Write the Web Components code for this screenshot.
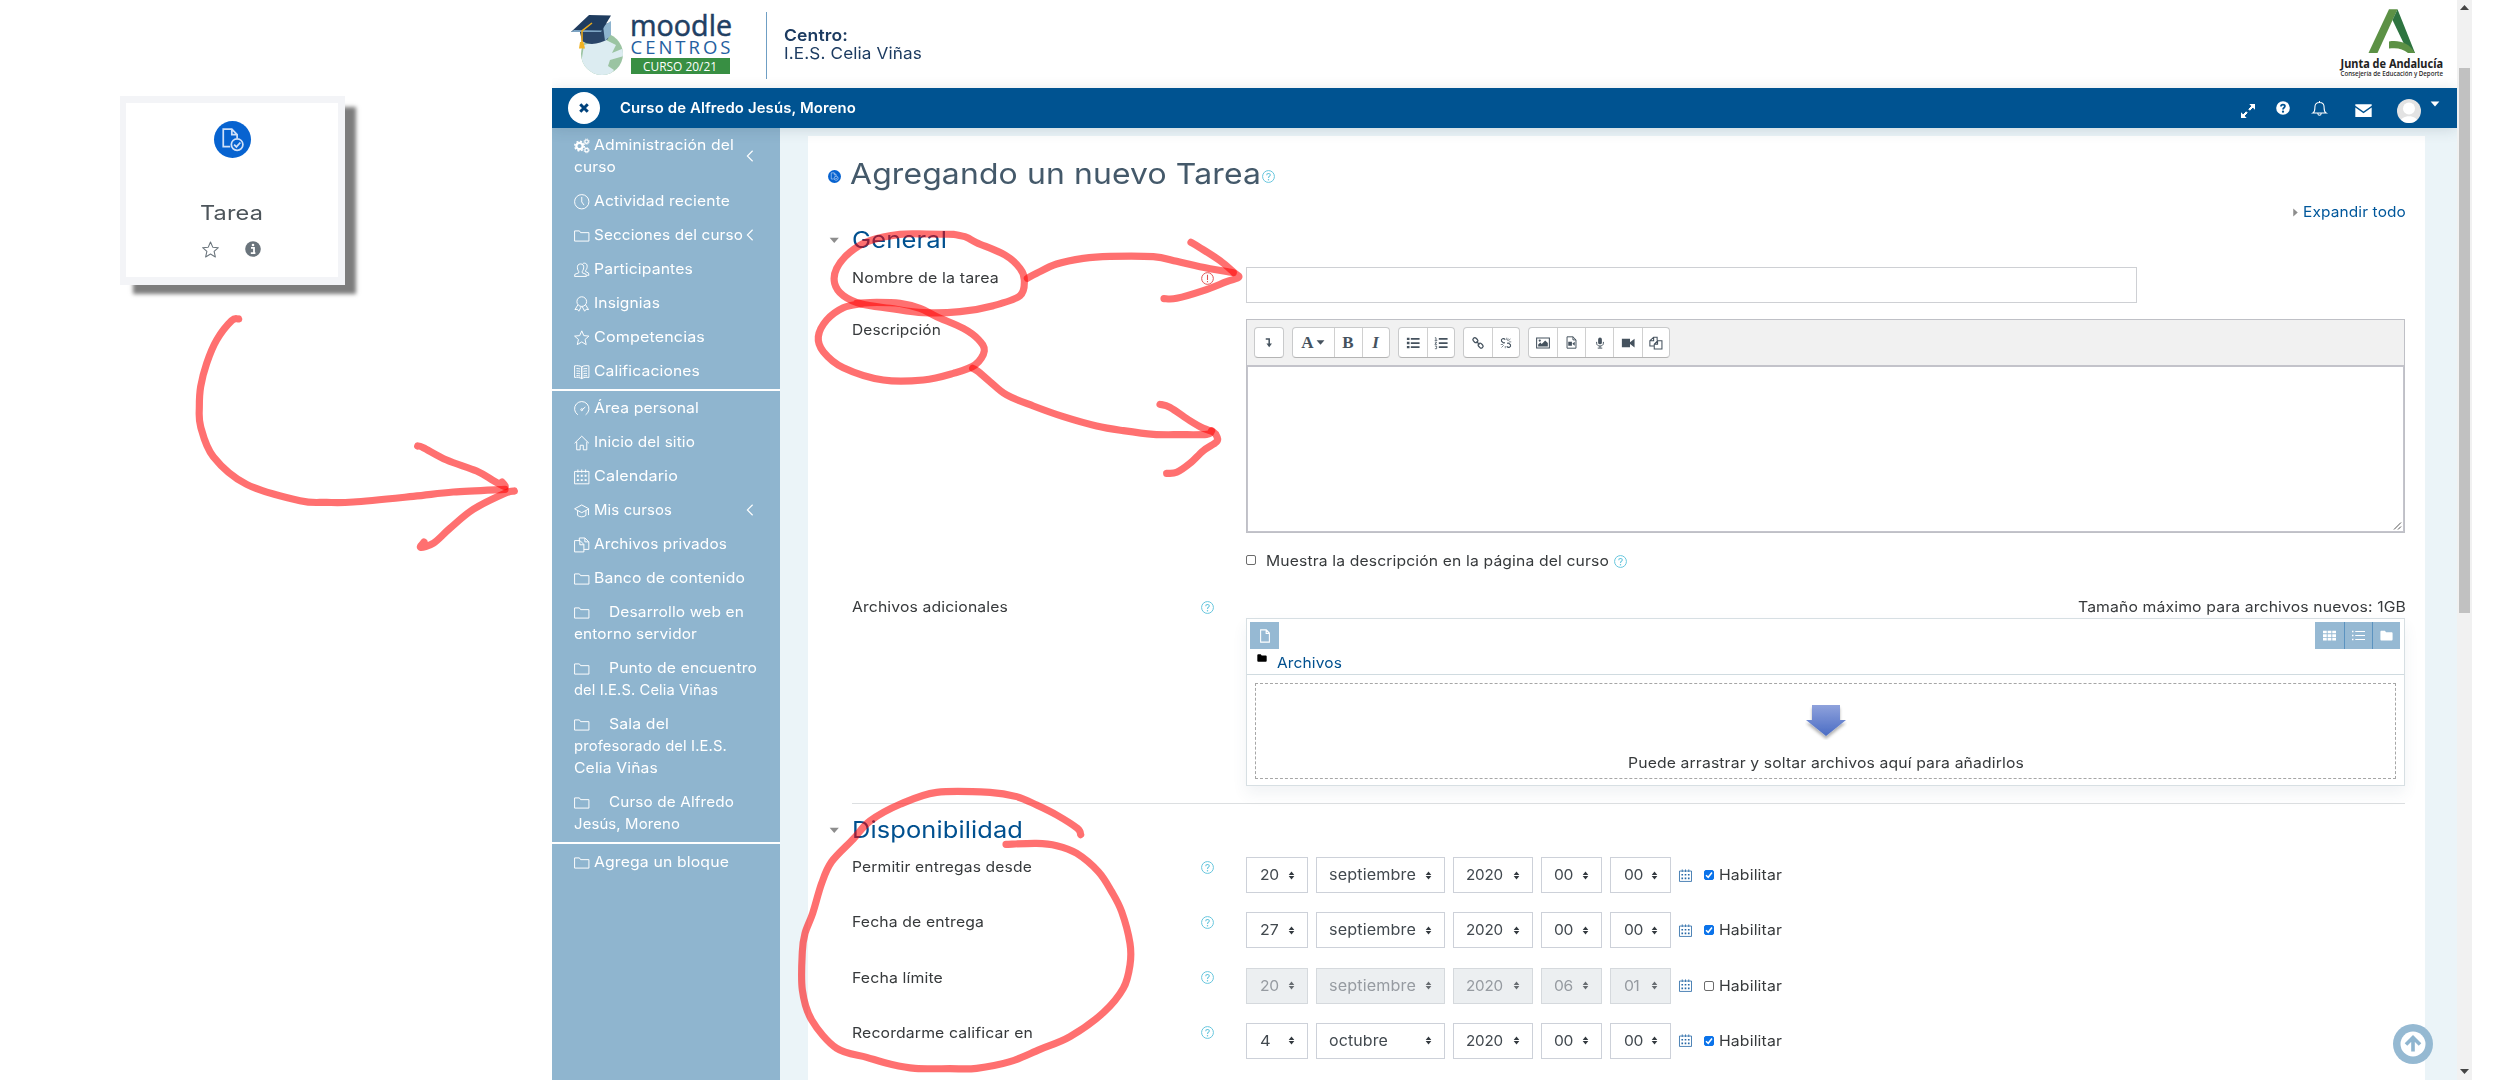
<!DOCTYPE html>
<html lang="es">
<head>
<meta charset="utf-8">
<title>Agregando un nuevo Tarea</title>
<style>
html,body{margin:0;padding:0;background:#fff}
body{width:2500px;height:1080px;overflow:hidden;position:relative;display:flex;font-family:Inter,"Open Sans",sans-serif;font-size:14.6px;line-height:22px;color:#373a3c}
</style>
</head>
<body>
<activity-card></activity-card>
<moodle-page></moodle-page>
<scroll-track></scroll-track>
<ink-layer></ink-layer>
<script>
const make = (name, css, html, after) => customElements.define(name, class extends HTMLElement {
  connectedCallback() {
    if (this.shadowRoot) return;
    const r = this.attachShadow({mode: 'open'});
    r.innerHTML = `<style>:host,*{box-sizing:border-box}${css}</style>` + (typeof html === 'function' ? html(this) : html);
    if (after) after(this, r);
  }
});

/* Text set to an exact advance width: a little letter spacing, then a horizontal stretch */
make('fit-text', `:host{display:block;white-space:nowrap;flex:none}span{display:inline-block;transform-origin:0 50%}`, `<span><slot></slot></span>`, (el, r) => {
  const w = +el.getAttribute('w'), s = r.querySelector('span'), n = el.textContent.length;
  el.style.width = w + 'px';
  const nat = s.getBoundingClientRect().width;
  if (!nat) return;
  const ls = Math.min(.12, (w - nat) / n);
  s.style.letterSpacing = ls.toFixed(3) + 'px';
  s.style.transform = `scaleX(${((w + 1) / (nat + ls * n)).toFixed(4)})`;
});

const S = 'fill="none" stroke="currentColor"';
const ICONS = {
  cogs: `<g fill="none" stroke="currentColor"><circle cx="5.7" cy="8.3" r="3.3" stroke-width="2.4"/><circle cx="5.7" cy="8.3" r="4.9" stroke-width="1.6" stroke-dasharray="2 1.85"/><circle cx="13" cy="3.7" r="1.8" stroke-width="1.3"/><circle cx="13" cy="3.7" r="2.7" stroke-width=".9" stroke-dasharray="1.2 .9"/><circle cx="13" cy="12.6" r="1.8" stroke-width="1.3"/><circle cx="13" cy="12.6" r="2.7" stroke-width=".9" stroke-dasharray="1.2 .9"/></g>`,
  clock: `<g ${S}><circle cx="8" cy="8" r="7.4"/><path d="M8 3v5.2l2.4 3.3"/></g>`,
  folder: `<path ${S} d="M.6 3h5l1.2 1.8h8.6v8.7H.6z"/>`,
  users: `<g ${S}><path d="M6.8 2C9.2 2 10.2 3.600 10 6c-.2 2-1 2.900-1.500 3.500v1.700l4 1.500.3 2.200H.6l.3-2.200 4-1.500V9.500C4.300 8.900 3.700 8 3.500 6 3.300 3.600 4.500 2 6.800 2z"/><path d="M9 1.800C9.700.9 13.600.6 13.600 4.300c0 2.200-.8 3.500-1.600 4.300v1.300l3 1.500.4 2.300h-2"/></g>`,
  badge: `<g ${S}><circle cx="8" cy="5.800" r="5"/><path d="M4 9.200 1 14l2.500-.3L5 15.700 7.500 11M12 9.200 15 14l-2.500-.3-1.500 2L8.500 11"/></g>`,
  star: `<path ${S} stroke-linejoin="round" d="m8 .9 2.100 4.900 5.300.5-4 3.500 1.200 5.300L8 12.300l-4.600 2.800 1.200-5.300-4-3.500 5.300-.5z"/>`,
  book: `<g ${S}><path d="M8 3C6 1.600 3 1.500.6 1.900v12c2.600-.4 5.400-.2 7.400 1.200 2-1.400 4.800-1.600 7.400-1.200v-12C13 1.500 10 1.600 8 3zv12M2.500 4.700c1.300-.1 2.600 0 3.800.4M2.500 7.200c1.300-.1 2.600 0 3.800.4M2.500 9.700c1.300-.1 2.600 0 3.800.4M2.500 12c1.300-.1 2.600 0 3.800.4M13.500 4.700c-1.300-.1-2.600 0-3.800.4M13.500 7.200c-1.300-.1-2.600 0-3.800.4M13.500 9.700c-1.300-.1-2.600 0-3.800.4M13.500 12c-1.300-.1-2.600 0-3.800.4M8 3v12"/></g>`,
  gauge: `<g ${S}><path d="M4 14.200A7.400 7.400 0 1 1 12 14.200M8.500 8.800l3.200-2.600"/><circle cx="8" cy="9" r="1"/></g>`,
  home: `<path ${S} d="M.6 8.500 8 1.200l7.400 7.300M2.800 7v8.300h3.600v-4.700h3.200v4.700h3.600V7"/>`,
  calendar: `<g ${S}><path d="M.6 2.500h14.800v12.800H.6zM4 .5v3.200M8 .5v3.200M12 .5v3.200"/></g><g fill="currentColor"><path d="M3 6h2v2H3zM7 6h2v2H7zM11 6h2v2h-2zM3 10.500h2v2H3zM7 10.500h2v2H7zM11 10.500h2v2h-2z"/></g>`,
  grad: `<path ${S} d="M.6 6 8 2l7.400 4L8 10zM3.700 7.800v5c2.500 2 6 2 8.600 0v-5M15 6v6.500"/>`,
  files: `<path ${S} d="M5.500 4.300V1h5.800l4 4v7.800h-5M.6 3.700h5.600l4 4v7.700H.6zM6 3.800V8h4.200M11.200 1.200V5h4"/>`,
  file: `<path ${S} stroke-width="1.200" d="M3 1h6.500L13 4.600V15H3zM9.300 1v4H13"/>`,
  chevron: `<path ${S} stroke-width="1.500" d="M11.500 1 4.500 8l7 7"/>`,
  close: `<path ${S} stroke-width="4.800" d="m2 2 12 12M14 2 2 14"/>`,
  expand: `<g fill="currentColor"><path d="M9.300 1H15v5.700zM1 9.300V15h5.700z"/><path d="M13.200 1.800 8.800 6.200l1 1 4.400-4.400zM6.200 8.800l-4.400 4.400 1 1 4.400-4.400z" stroke="currentColor"/></g>`,
  help: `<circle cx="8" cy="8" r="7.800" fill="currentColor"/><path d="M5.700 6.300C5.700 3.300 10.300 3.500 10.200 6 10.200 7.700 8 7.700 8 9.600" fill="none" stroke="#005391" stroke-width="2"/><circle cx="8" cy="12.200" r="1.300" fill="#005391"/>`,
  bell: `<path ${S} stroke-width="1.150" d="M1 12.800h14C12.800 11.500 13 9.500 12.900 6.500 12.900 3.500 11 1.600 8 1.600S3.100 3.500 3.100 6.500C3 9.500 3.200 11.500 1 12.800zM6.200 13.300c.2 2.600 3.400 2.600 3.600 0M8 0v1.600"/>`,
  mail: `<path fill="currentColor" d="M.3 2h15.400v1.600L8 9 .3 3.600zM.3 5.100 8 10.500l7.700-5.400v9H.3z"/>`,
  q: `<circle cx="8" cy="8" r="7.300" ${S} stroke-width="1.200"/><path ${S} stroke-width="1.300" d="M5.800 6.400C5.800 3.600 10.300 3.700 10.200 6 10.200 7.600 8 7.700 8 9.700"/><circle cx="8" cy="11.900" r=".9" fill="currentColor"/>`,
  bang: `<circle cx="8" cy="8" r="7.200" ${S} stroke-width="1.200"/><path ${S} stroke-width="1.300" d="M8 3.500v6.200M8 11v1.500"/>`,
  down: `<path fill="currentColor" d="M1 4h14L8 12z"/>`,
  right: `<path fill="currentColor" d="M4 1v14l8-7z"/>`,
  task: `<circle cx="8" cy="8" r="8" fill="#0763d0"/><g fill="none" stroke="#cfe0f8" stroke-width=".75"><path d="M7 11.100H4V3.500h3.700l2.300 2.400v1.600M7.700 3.500v2.400H10"/><circle cx="10" cy="10.200" r="2.500"/><path d="m8.700 10.200 1 1 1.700-1.900"/></g>`,
  info: `<circle cx="8" cy="8" r="7.800" fill="currentColor"/><path d="M6 6.800h3v5M5.800 12.200h4.600" fill="none" stroke="#fff" stroke-width="1.800"/><circle cx="8" cy="4" r="1.300" fill="#fff"/>`,
  turn: `<path ${S} stroke-width="2.200" d="M4 3h5v8"/><path fill="currentColor" d="M5 9.500h8L9 15z"/>`,
  ul: `<path fill="currentColor" d="M1 2h3v2.600H1zM1 6.700h3v2.600H1zM1 11.400h3V14H1zM5.500 2.200h10v2h-10zM5.500 7h10v2h-10zM5.500 11.700h10v2h-10z"/>`,
  ol: `<path fill="currentColor" d="M5.500 2.200h10v2h-10zM5.500 7h10v2h-10zM5.500 11.700h10v2h-10z"/><path ${S} stroke-width=".9" d="M1 2h1.300v3M.8 5h3M1 7h2L1 9.500h2.500M1 11.500h2v3H1"/>`,
  link: `<g ${S} stroke-width="1.700"><rect x="1" y="1.800" width="7" height="5" rx="2.300" transform="rotate(45 4.500 4.300)"/><rect x="8" y="9" width="7" height="5" rx="2.300" transform="rotate(45 11.500 11.500)"/><path d="m6 6 4 4"/></g>`,
  unlink: `<g ${S} stroke-width="1.500"><path d="M7 3.500C5 1 1 2.500 2 5.500L4.500 8l2-.5M9 12.500c2 2.500 6 1 5-2L11.500 8l-2 .5"/><path stroke-width=".9" d="M9 1v3M11 5l3-2.500M12 6.500h3M1 10h3M5 11l-3 3M7 12v3M10 5l1-3"/></g>`,
  image: `<path ${S} stroke-width="1.200" d="M.7 2.200h14.600v11.600H.7z"/><path fill="currentColor" d="M2.500 12V9.800L5 7.500l1.500 1.500L10.500 5l3 3v4z"/><circle cx="4.300" cy="5.200" r="1.300" fill="currentColor"/>`,
  filevid: `<path ${S} stroke-width="1.200" d="M2.500 1h7.300l3.700 3.700V15h-11zM9.800 1v3.800h3.700"/><path fill="currentColor" d="M4 7h4.500v5H4zM9 9.500 12 7v5z"/>`,
  mic: `<rect x="5.500" y=".8" width="5" height="9" rx="2.500" fill="currentColor"/><path ${S} stroke-width="1.300" d="M3.500 6.500v1.800c0 5 9 5 9 0V6.500M8 12v2.500M5 14.800h6"/>`,
  video: `<path fill="currentColor" d="M1 3.200h9.300V7L15.500 3v10L10.300 9v3.800H1z"/>`,
  copy: `<path ${S} stroke-width="1.200" d="M9.300 5.200V1.400h-4L1 5.500v6h4.500M5.300 1.400v4.100H1M9.800 5.500h5v9.300H6V9.300zM9.800 5.500v3.800H6"/>`,
  solid: `<path fill="currentColor" d="M.5 3.500c0-1 .6-1.500 1.500-1.500h4l1.500 2H14c1 0 1.500.5 1.500 1.500v7c0 1-.5 1.500-1.500 1.500H2c-1 0-1.500-.5-1.500-1.500z"/>`,
  grid: `<path fill="currentColor" d="M0 2h4.600v3.300H0zM5.700 2h4.600v3.300H5.700zM11.400 2H16v3.300h-4.600zM0 6.400h4.600v3.300H0zM5.700 6.400h4.600v3.300H5.700zM11.400 6.400H16v3.300h-4.600zM0 10.800h4.600V14H0zM5.700 10.800h4.600V14H5.700zM11.400 10.800H16V14h-4.600z"/>`,
  list: `<path fill="currentColor" d="M0 2.200h1.800V4H0zM0 7.200h1.800V9H0zM0 12h1.800v1.800H0zM4 2.600h12v1H4zM4 7.500h12v1H4zM4 12.400h12v1H4z"/>`,
  sort: `<path fill="currentColor" d="M8 1l5 6H3zM8 15l5-6H3z"/>`
};
make('ui-icon', `:host{display:block;flex:none}svg{display:block;width:100%;height:100%;overflow:visible}`,
  el => { const s = el.getAttribute('s') || 16; el.style.width = el.style.height = s + 'px';
    return `<svg viewBox="0 0 16 16">${ICONS[el.getAttribute('n')]}</svg>`; });

make('activity-card', `
:host{display:block;width:552px;flex:none;padding:96px 0 0 120px}
.c{width:225px;height:189px;background:#fff;border:solid #f3f4f7;border-width:7px 7px 8px 6px;box-shadow:12px 10px 4px -1px #7d7d7d;display:flex;flex-direction:column;align-items:center}
ui-icon[n=task]{margin:18px 0 41px}
fit-text{font-size:20px;line-height:28px;color:#4d555b;margin-left:-3px}
.r{display:flex;gap:26px;margin:14px 0 0 -1px;color:#6a747c}`,
`<div class="c"><ui-icon n="task" s="37"></ui-icon><fit-text w="62">Tarea</fit-text><div class="r"><ui-icon n="star" s="17"></ui-icon><ui-icon n="info" s="16"></ui-icon></div></div>`);

make('site-header', `
:host{display:flex;height:88px;background:#fff;padding-left:18px}
.logo{width:164px;height:88px;display:block}
.sep{width:1px;height:67px;margin:12px 17px 0 32px;background:#6f9fc4}
.t{color:#1c3b61;padding-top:26px;font-size:16.500px;line-height:18px}
.t fit-text:first-child{font-weight:600}
.j{margin-left:auto;width:120px;height:88px}`,
`<svg class="logo" viewBox="570 0 164 88">
 <defs><clipPath id="g"><ellipse cx="602" cy="54" rx="21" ry="21"/></clipPath></defs>
 <ellipse cx="602" cy="54" rx="21" ry="21" fill="#9bc4a2"/>
 <g clip-path="url(#g)" fill="#dcecf1"><path d="M584 45l20-6 12 6-4 8 12-5v8l-14 4-2 6 6 4-6 8-20-2-7-12z"/></g>
 <path d="M579 28 582 41c7 5 18 3 26-2l2-16z" fill="#2a4568"/><path d="M603 26 611 21v14l-6 6z" fill="#8eb4cf"/>
 <path d="M571 32 589 15l22 .5-10 16.500z" fill="#1f3c5f"/><path d="M571 32l30 0 1-1.500-28-.5z" fill="#7ea5c4"/>
 <path d="M592 23 582 31v13" fill="none" stroke="#e9a91d" stroke-width="1.600"/><path d="M580 42h3.500l1.500 6.500h-6z" fill="#f0b323"/>
 <text x="630" y="36" font-family="Open Sans" font-size="29" font-weight="400" stroke="#1f4063" stroke-width=".5" fill="#1f4063" textLength="102" lengthAdjust="spacingAndGlyphs">moodle</text>
 <text x="630.500" y="54" font-family="Open Sans" font-size="18.500" fill="#2460a0" textLength="100">CENTROS</text>
 <rect x="631" y="58" width="99" height="16" fill="#388f43"/>
 <text x="643" y="70.500" font-family="Open Sans" font-size="12.500" fill="#fff" textLength="74" lengthAdjust="spacingAndGlyphs">CURSO 20/21</text>
</svg>
<div class="sep"></div>
<div class="t"><fit-text w="63">Centro:</fit-text><fit-text w="137">I.E.S. Celia Viñas</fit-text></div>
<svg class="j" viewBox="2337 0 120 88">
 <path d="M2368.500 53 2389 9.300h8.500l-20 43.700z" fill="#5c9145"/><path d="M2397.500 9.300 2415 53h-3l-8-9-11.500-24z" fill="#2e7440"/><path d="M2389 41.500c10-1.500 20 1 26 11.500h-7c-5-4.500-11-5.500-19-4.500z" fill="#5c9145"/>
 <text x="2340.500" y="67.500" font-family="Noto Sans" font-weight="700" font-size="12.500" fill="#222" textLength="102.500" lengthAdjust="spacingAndGlyphs">Junta de Andalucía</text>
 <text x="2340.500" y="76" font-family="Noto Sans" font-size="6.800" font-weight="500" fill="#222" textLength="102.500" lengthAdjust="spacingAndGlyphs">Consejería de Educación y Deporte</text>
</svg>`);

make('top-bar', `
:host{display:flex;align-items:center;height:40px;background:#005391;color:#fff;padding:0 17px 0 16px;position:relative;box-shadow:0 2px 14px rgba(40,70,90,.16)}
.x{width:32px;height:32px;border-radius:50%;background:#fff;color:#00427c;display:flex;align-items:center;justify-content:center;margin-right:20px}
fit-text{font-weight:600;font-size:14.400px}
.r{margin-left:auto;display:flex;align-items:center}
.av{width:24px;height:24px;margin:5px 9px 0 25px;display:block}`,
`<div class="x"><ui-icon n="close" s="10"></ui-icon></div><fit-text w="235">Curso de Alfredo Jesús, Moreno</fit-text>
<div class="r"><ui-icon n="expand" s="16" style="margin-top:5px"></ui-icon><ui-icon n="help" s="14" style="margin:-1px 0 0 20px"></ui-icon><ui-icon n="bell" s="15" style="margin:0 0 0 22px"></ui-icon><ui-icon n="mail" s="17" style="margin:5px 0 0 28px"></ui-icon>
<svg class="av" viewBox="0 0 24 24"><clipPath id="a"><circle cx="12" cy="12" r="12"/></clipPath><circle cx="12" cy="12" r="12" fill="#e3e3e3"/><g clip-path="url(#a)" fill="#fff"><circle cx="12" cy="9.500" r="6"/><path d="M3 24c0-9 18-9 18 0z"/></g></svg>
<ui-icon n="down" s="10" style="margin:-8px 0 0 0"></ui-icon></div>`);

make('nav-item', `
:host{display:flex;align-items:center;justify-content:space-between;padding:6px 27px 6px 21.500px;color:#fff}
.f{display:flex;gap:4.500px}.f.sub{gap:20px}.f ui-icon{margin-top:4px}
.l{padding-left:.5px}`,
el => { const L = el.getAttribute('t').split('|').map(x => x.split('@'));
  return `<div><div class="f ${el.hasAttribute('sub') ? 'sub' : ''}"><ui-icon n="${el.getAttribute('i')}" s="15.500"></ui-icon><fit-text w="${L[0][1]}">${L[0][0]}</fit-text></div>${L.slice(1).map(x => `<fit-text class="l" w="${x[1]}">${x[0]}</fit-text>`).join('')}</div>${el.hasAttribute('more') ? '<ui-icon n="chevron" s="12" style="margin-right:-3px"></ui-icon>' : ''}`; });

make('side-nav', `
:host{display:block;width:228px;flex:none;background:#8fb5cf;font-size:14.600px}
section{border-bottom:2px solid #fff}section:last-child{border:0;padding-top:1px}
.a{height:263px;padding-top:0}.b{height:453px}`,
`<section class="a">
<nav-item i="cogs" more t="Administración del@139|curso@41"></nav-item>
<nav-item i="clock" t="Actividad reciente@135"></nav-item>
<nav-item i="folder" more t="Secciones del curso@148"></nav-item>
<nav-item i="users" t="Participantes@98"></nav-item>
<nav-item i="badge" t="Insignias@65"></nav-item>
<nav-item i="star" t="Competencias@110"></nav-item>
<nav-item i="book" t="Calificaciones@105"></nav-item></section>
<section class="b">
<nav-item i="gauge" t="Área personal@104"></nav-item>
<nav-item i="home" t="Inicio del sitio@100"></nav-item>
<nav-item i="calendar" t="Calendario@83"></nav-item>
<nav-item i="grad" more t="Mis cursos@77"></nav-item>
<nav-item i="files" t="Archivos privados@132"></nav-item>
<nav-item i="folder" t="Banco de contenido@150"></nav-item>
<nav-item i="folder" sub t="Desarrollo web en@134|entorno servidor@122"></nav-item>
<nav-item i="folder" sub t="Punto de encuentro@147|del I.E.S. Celia Viñas@143"></nav-item>
<nav-item i="folder" sub t="Sala del@59|profesorado del I.E.S.@152|Celia Viñas@83"></nav-item>
<nav-item i="folder" sub t="Curso de Alfredo@124|Jesús, Moreno@105"></nav-item></section>
<section><nav-item i="folder" t="Agrega un bloque@134"></nav-item></section>`);

make('form-heading', `
:host{display:flex;align-items:center;height:30px;padding-left:21px;color:#00508f;font-size:23.500px;line-height:30px}
ui-icon{color:#8d8d8d;margin-right:12.500px}`, `<ui-icon n="down" s="10.500"></ui-icon><slot></slot>`);

make('form-row', `
:host{display:flex;align-items:flex-start;margin-left:44px}
.l{width:394px;flex:none;display:flex;align-items:center;justify-content:space-between;padding-right:32px;height:var(--lh,22px)}
.f{flex:1}ui-icon{color:#64c4dc}ui-icon[n=bang]{color:#e05050}`,
el => `<div class="l"><fit-text w="${el.getAttribute('w')}">${el.getAttribute('label')}</fit-text>${el.getAttribute('i') ? `<ui-icon n="${el.getAttribute('i')}" s="13"></ui-icon>` : ''}</div><div class="f"><slot></slot></div>`);

make('text-editor', `
:host{display:flex;flex-direction:column;width:1159px;height:214px;border:1px solid #bfc0c6}
.bar{height:47px;background:#f1f1f1;border-bottom:2px solid #c3c3ca;padding:7px 0 0 7px;display:flex;gap:8px}
.g{display:flex;height:31px;border:1px solid #c9cacb;border-bottom-color:#b4b4b4;border-radius:4px;background:#fff;color:#45525e}
.g>div{width:28px;display:flex;align-items:center;justify-content:center;font:bold 17px "Liberation Serif",serif;border-left:1px solid #d0d0d0}
.g>div:first-child{border:0}
.area{flex:1;background:#fff;border:solid #c4c4cc;border-width:0 1px 1px;display:flex;justify-content:flex-end;align-items:flex-end;padding:1px}`,
() => { const b = (n, w = 28, s = 14) => `<div style="width:${w}px"><ui-icon n="${n}" s="${s}"></ui-icon></div>`;
return `<div class="bar"><div class="g">${b('turn', 27.5, 11)}</div><div class="g"><div style="width:41px;gap:2px">A<ui-icon n="down" s="9"></ui-icon></div><div>B</div><div style="width:27px;font-style:italic">I</div></div><div class="g">${b('ul')}${b('ol', 27)}</div><div class="g">${b('link', 28, 12)}${b('unlink', 27, 12)}</div><div class="g">${b('image', 28.5)}${b('filevid', 28, 13)}${b('mic', 28, 12)}${b('video', 28.5, 14)}${b('copy', 27, 14)}</div></div>
<div class="area"><svg width="9" height="9" viewBox="0 0 9 9"><path d="M1 8.500 8 1.500M5 8.500l3-3" stroke="#555" fill="none"/></svg></div>`; });

make('check-box', `:host{display:flex;align-items:center;flex:none}i{display:block;width:10px;height:10px;border:1px solid #6c6c6c;border-radius:2px;background:#fff}i.on{background:#0b73ea;border-color:#0b73ea}svg{display:block;width:8px;height:8px}`,
  el => el.hasAttribute('on') ? `<i class="on"><svg viewBox="0 0 8 8"><path d="M1 4.200 3.200 6.300 7 1.500" stroke="#fff" stroke-width="1.500" fill="none"/></svg></i>` : '<i></i>');

make('file-manager', `
:host{display:block;width:1159px}
.max{display:flex;justify-content:flex-end;height:22px}
.box{height:168px;border:1px solid #d7dfe3;box-shadow:0 8px 14px rgba(60,90,110,.07)}
.top{height:56px;border-bottom:1px solid #d0dbe0;padding:3px 4px 0 3px;display:flex;flex-direction:column}
.r{display:flex;justify-content:space-between}
.b{background:#96b9d3;color:#fff;height:27px;display:flex}
.b>div{width:28px;display:flex;align-items:center;justify-content:center;border-left:1px solid #5b93c0}.b>div:first-child{border:0;width:29px}
.p{display:flex;gap:10px;color:#00508f;padding:3px 0 0 7px}
.p ui-icon{color:#000;margin-top:1px}
.drop{height:96px;margin:8px 8px 0 8px;border:1px dashed #a6a6a6;display:flex;flex-direction:column;align-items:center;padding-top:20px}
.drop svg{display:block;width:42px;height:36px;margin-bottom:12px;margin-left:0}`,
`<div class="max"><fit-text w="327">Tamaño máximo para archivos nuevos: 1GB</fit-text></div>
<div class="box"><div class="top"><div class="r"><div class="b"><div><ui-icon n="file" s="14"></ui-icon></div></div><div class="b"><div><ui-icon n="grid" s="13"></ui-icon></div><div><ui-icon n="list" s="13"></ui-icon></div><div><ui-icon n="solid" s="13"></ui-icon></div></div></div>
<div class="p"><ui-icon n="solid" s="10"></ui-icon><fit-text w="64">Archivos</fit-text></div></div>
<div class="drop"><svg viewBox="0 0 42 36"><defs><linearGradient id="d" x1="0" y1="0" x2="0" y2="1"><stop offset="0" stop-color="#8fa2dc"/><stop offset="1" stop-color="#4a6cc4"/></linearGradient><filter id="s" x="-20%" y="-20%" width="140%" height="160%"><feDropShadow dx="0" dy="3" stdDeviation="1.500" flood-opacity=".3"/></filter></defs><path filter="url(#s)" d="M7 1h28v15h6L21 32 1 16h6z" fill="url(#d)"/></svg><fit-text w="395">Puede arrastrar y soltar archivos aquí para añadirlos</fit-text></div></div>`);

make('date-picker', `
:host{display:flex;align-items:center;gap:8px;height:36px}
.s{height:36px;border:1px solid #cdd1d9;background:#fff;display:flex;align-items:center;justify-content:space-between;padding:0 11px 0 12.500px;color:#42494f;font-size:14.800px}
.s ui-icon{color:#33393f}
.off{background:#eceff1;border-color:#d5d9dd;color:#969ba1}.off ui-icon{color:#676c71}
.c{color:#2667a5}.h{display:flex;gap:4.500px;align-items:center;margin-left:4px}`,
el => { const v = el.getAttribute('v').split(' '), W = [61.5, 129, 80, 61.5, 61], T = [18, el.getAttribute('v').includes('oct') ? 58 : 86, 36, 18, 18], off = el.hasAttribute('off');
return v.map((x, i) => `<div class="s ${off ? 'off' : ''}" style="width:${W[i]}px"><fit-text w="${x.length === 1 ? 9 : x === '01' ? 14 : T[i]}">${x}</fit-text><ui-icon n="sort" s="9"></ui-icon></div>`).join('') +
`<ui-icon class="c" n="calendar" s="13"></ui-icon><div class="h"><check-box ${off ? '' : 'on'}></check-box><fit-text w="62">Habilitar</fit-text></div>`; });

make('task-form', `
:host{display:block;width:1617px;height:944px;background:#fff;padding-top:16px}
.t{display:flex;align-items:center;height:44px;padding-left:19.500px;color:#44596a;font-size:29px;line-height:44px}
.t .a{margin:5px 9px 0 0}.t .q{margin:5px 0 0 2px;color:#64c4dc}
.e{display:flex;justify-content:flex-end;align-items:center;gap:3px;margin-top:5px;height:22px;padding-right:20px;color:#00579b}
.e ui-icon{color:#8d8d8d}
.in{width:891px;height:36px;border:1px solid #ced0d4}
.ck{display:flex;align-items:center;height:22px;margin:17px 0 24px 438px}
.ck check-box{margin:-3px 10px 0 0}.ck ui-icon{color:#64c4dc;margin-left:6px}
hr{border:0;height:1px;background:#dcdfe1;margin:17px 20px 11px 44px}
.d{height:55.330px;--lh:20px}`,
`<div class="t"><ui-icon class="a" n="task" s="13"></ui-icon><fit-text w="410">Agregando un nuevo Tarea</fit-text><ui-icon class="q" n="q" s="13"></ui-icon></div>
<div class="e"><ui-icon n="right" s="9"></ui-icon><fit-text w="102">Expandir todo</fit-text></div>
<form-heading style="margin:2px 0 12px"><fit-text w="94">General</fit-text></form-heading>
<form-row label="Nombre de la tarea" w="146" i="bang"><div class="in"></div></form-row>
<form-row label="Descripción" w="88" style="margin-top:16px"><text-editor></text-editor></form-row>
<div class="ck"><check-box></check-box><fit-text w="342">Muestra la descripción en la página del curso</fit-text><ui-icon n="q" s="13"></ui-icon></div>
<form-row label="Archivos adicionales" w="155" i="q"><file-manager></file-manager></form-row>
<hr>
<form-heading style="margin-bottom:12px"><fit-text w="170">Disponibilidad</fit-text></form-heading>
<form-row class="d" label="Permitir entregas desde" w="179" i="q"><date-picker v="20 septiembre 2020 00 00"></date-picker></form-row>
<form-row class="d" label="Fecha de entrega" w="131" i="q"><date-picker v="27 septiembre 2020 00 00"></date-picker></form-row>
<form-row class="d" label="Fecha límite" w="90" i="q"><date-picker off v="20 septiembre 2020 06 01"></date-picker></form-row>
<form-row class="d" label="Recordarme calificar en" w="180" i="q"><date-picker v="4 octubre 2020 00 00"></date-picker></form-row>`);

make('moodle-page', `
:host{display:flex;flex-direction:column;width:1905px;height:1080px;flex:none;overflow:hidden;position:relative}
top-bar{z-index:1}
.m{display:flex;height:952px;background:#ebf4f8}
task-form{margin:8px 0 0 28px}
.up{position:absolute;left:1841px;top:1024px;width:40px;height:40px}`,
`<site-header></site-header><top-bar></top-bar><div class="m"><side-nav></side-nav><task-form></task-form></div>
<svg class="up" viewBox="0 0 40 40"><circle cx="20" cy="20" r="20" fill="#95b9d2"/><circle cx="20" cy="20" r="12.500" fill="#fff"/><path d="M20 27.500V14M13 20.500l7-7 7 7" fill="none" stroke="#8fb5cf" stroke-width="3.600"/></svg>`);

make('scroll-track', `
:host{display:flex;flex-direction:column;align-items:center;justify-content:space-between;width:15px;height:1080px;background:#f1f1f1;flex:none}
.th{width:11px;height:545px;background:#c1c1c1;margin-top:58px}
svg{display:block;width:9px;height:5px;flex:none}.dn{margin-top:auto;margin-bottom:6px}.up{margin-top:5px}`,
`<svg class="up" viewBox="0 0 9 5"><path d="M0 5 4.500 0 9 5z" fill="#444"/></svg><div class="th"></div><svg class="dn" viewBox="0 0 9 5"><path d="M0 0 4.500 5 9 0z" fill="#444"/></svg>`);

/* Hand-drawn marker strokes, smoothed from sampled points in a 3x grid */
make('ink-layer', `:host{position:absolute;display:block;left:0;top:0;width:2500px;height:1080px;pointer-events:none;z-index:5}svg{display:block}`, () => {
  const smooth = p => { let d = `M${p[0]}`;
    for (let i = 0; i < p.length - 1; i++) { const a = p[i - 1] || p[i], b = p[i], c = p[i + 1], e = p[i + 2] || c;
      d += `C${b[0] + (c[0] - a[0]) / 6} ${b[1] + (c[1] - a[1]) / 6} ${c[0] - (e[0] - b[0]) / 6} ${c[1] - (e[1] - b[1]) / 6} ${c}`; }
    return d; };
  const P = s => s.split(' ').map(x => x.split(',').map(Number));
  const G = [[80, 80, [
    '476,717 455,722 410,780 380,850 362,920 358,980 362,1040 400,1130 500,1213 660,1262 740,1267 820,1266 1000,1249 1120,1236 1275,1228',
    '1013,1098 1030,1103 1100,1140 1190,1173 1240,1202 1275,1220 1266,1206',
    '1303,1233 1275,1240 1180,1288 1110,1345 1060,1390 1022,1402 1032,1386']],
   [790, 140, [
    '490,283 410,282 330,283 240,302 180,337 140,385 134,430 160,467 215,492 300,505 400,518 510,515 610,497 690,467 703,420 690,385 645,345 560,308 530,292 490,283',
    '200,490 260,487 330,490 390,505 440,530 520,565 565,598 583,632 555,675 490,700 400,720 280,720 160,683 100,635 85,590 110,540 160,503 215,491',
    '712,415 740,400 800,372 880,355 960,349 1090,350 1160,364 1230,380 1330,398',
    '1203,307 1230,323 1290,362 1330,396 1346,412 1310,425 1240,452 1160,475 1122,476',
    '548,685 565,695 600,725 650,765 730,798 820,830 920,858 1000,872 1090,883 1170,884 1250,883 1265,872',
    '1110,793 1140,802 1200,842 1240,865 1270,876 1281,890 1279,906 1240,932 1200,970 1160,997 1130,1000']],
   [790, 770, [
    '872,194 862,175 800,135 740,105 680,80 600,67 440,67 330,103 240,153 190,207 125,275 95,340 68,430 45,490 37,545 37,660 65,750 140,835 230,862 300,882 375,895 480,896 560,895 660,875 750,838 840,800 940,728 1000,655 1020,585 1020,520 995,425 965,365 925,305 860,250 800,227 740,220 648,223']]];
  return `<svg width="2500" height="1080" fill="none" stroke="rgba(255,0,0,.56)" stroke-width="21.500" stroke-linecap="round" stroke-linejoin="round">${G.map(([x, y, a]) => `<g transform="translate(${x} ${y}) scale(.33333)">${a.map(s => `<path d="${smooth(P(s))}"/>`).join('')}</g>`).join('')}</svg>`;
});
</script>
</body>
</html>
